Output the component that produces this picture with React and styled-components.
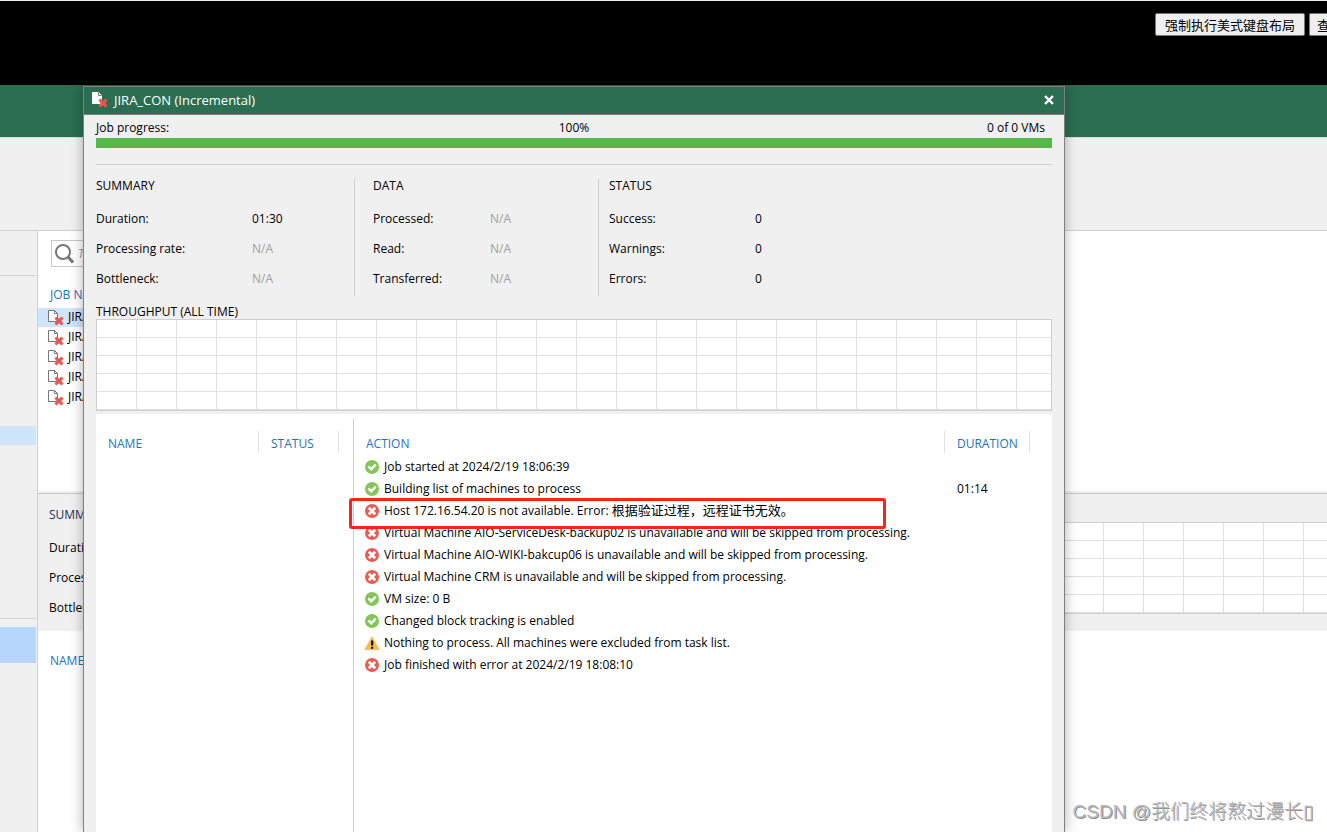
import React from 'react';
import styled, { createGlobalStyle, css } from 'styled-components';

const GlobalStyle = createGlobalStyle`
*, *::before, *::after {
    box-sizing: border-box;
}
body {
    margin: 0;
    overflow: hidden;
    font-family: "Open Sans", "Noto Sans CJK SC", sans-serif;
    font-size: 12px;
    line-height: 16px;
    color: #000;
}
button, input {
    font: inherit;
    color: inherit;
}
h1, h2, p, dl, dd {
    margin: 0;
    font: inherit;
}
table {
    border-collapse: collapse;
    table-layout: fixed;
}
th, td {
    padding: 0;
    text-align: left;
    font-weight: 400;
}
`

const Screen = styled.div`
position: relative;
display: flex;
flex-direction: column;
height: 100vh;
overflow: hidden;
background: #fff;
`

const ConsoleBar = styled.header`
display: flex;
justify-content: flex-end;
align-items: flex-start;
gap: 4px;
height: 85px;
flex: none;
padding-top: 12px;
background: #000;
border-top: 1px solid #f0f0f0;
overflow: hidden;
`

const KeyButton = styled.button`
flex: none;
height: 23px;
padding: 0 9px;
border: 1px solid #767676;
border-radius: 2px;
background: #efefef;
font-family: "Noto Sans CJK SC", sans-serif;
font-size: 13px;
line-height: 20px;
white-space: nowrap;
${({ $cut }) => $cut && css`
    width: 18px;
    padding: 0 0 0 7px;
    border-right: 0;
    border-radius: 2px 0 0 2px;
    overflow: hidden;
`}
`

const Ribbon = styled.div`
flex: none;
height: 52px;
background: #2b6e52;
`

const Toolbar = styled.div`
flex: none;
height: 94px;
background: #f0f0f0;
border-top: 1px solid #dcdcdc;
border-bottom: 1px solid #d0d0d0;
`

const Workspace = styled.div`
display: flex;
flex: 1;
min-height: 0;
`

const Sidebar = styled.nav`
display: flex;
flex-direction: column;
width: 38px;
flex: none;
padding-right: 1px;
background: #f0f0f0;
border-right: 1px solid #d0d0d0;
`

const SideHead = styled.div`
height: 45px;
border-bottom: 1px solid #d0d0d0;
`

const SideTree = styled.div`
height: 343px;
padding-top: 150px;
border-bottom: 1px solid #d0d0d0;
`

const SideItem = styled.div`
height: ${({ $tall }) => ($tall ? 36 : 19)}px;
margin-top: ${({ $tall }) => ($tall ? 8 : 0)}px;
background: ${({ $tall }) => ($tall ? '#b5d7fb' : '#cfe5f9')};
`

const Content = styled.main`
display: flex;
flex-direction: column;
flex: 1;
min-width: 0;
`

const JobList = styled.section`
height: 262px;
flex: none;
padding-top: 9px;
border-bottom: 2px solid #f0f0f0;
`

const SearchBox = styled.label`
display: flex;
align-items: center;
gap: 4px;
width: 300px;
height: 27px;
margin-left: 13px;
padding-left: 3px;
border: 1px solid #c8c8c8;
`

const SearchInput = styled.input`
flex: 1;
border: 0;
padding: 0;
outline: 0;
background: none;
font-style: italic;
&::placeholder {
    color: #999;
    opacity: 1;
}
`

const JobTable = styled.table`
width: 600px;
margin-top: 17px;
& th {
    height: 23px;
    padding: 0 0 1px 12px;
    color: #1c74bc;
}
`

const JobRow = styled.tr`
height: 20px;
& td {
    background: ${({ $active }) => ($active ? '#cfe5f9' : 'none')};
    background-clip: padding-box;
    border-top: 1px solid #fff;
}
`

const JobName = styled.div`
display: flex;
align-items: center;
gap: 4px;
height: 18px;
padding-left: 9px;
`

const JobDetails = styled.section`
display: flex;
justify-content: space-between;
height: 138px;
flex: none;
padding: 14px 0 0 11px;
background: #f0f0f0;
border-top: 1px solid #c8c8c8;
`

const BackChart = styled.div`
width: 464px;
margin-top: 14px;
`

const BackHead = styled.p`
padding: 22px 12px;
color: #1c74bc;
`

const Dialog = styled.div`
position: absolute;
top: 86px;
right: 262px;
bottom: 0;
left: 83px;
display: flex;
flex-direction: column;
background: #f0f0f0;
border: 1px solid #7c807e;
border-bottom: 0;
box-shadow: 0 0 12px rgba(0, 0, 0, .3);
`

const TitleBar = styled.header`
display: flex;
align-items: center;
gap: 6px;
height: 28px;
flex: none;
padding: 0 8px 2px 7px;
background: #2b6e52;
border-bottom: 1px solid #7c807e;
color: #fff;
`

const Title = styled.h1`
flex: 1;
font-size: 13px;
`

const CloseButton = styled.button`
display: flex;
padding: 2px;
border: 0;
background: none;
`

const DialogBody = styled.div`
display: flex;
flex-direction: column;
flex: 1;
min-height: 0;
padding: 5px 12px 0;
`

const ProgressLabels = styled.div`
display: grid;
grid-template-columns: 1fr auto 1fr;
& > :last-child {
    padding-right: 7px;
    text-align: right;
}
`

const ProgressBar = styled.div`
height: 10px;
margin-top: 2px;
background: #54b948;
`

const Stats = styled.div`
display: grid;
grid-template-columns: 258px 244px 1fr;
margin-top: 16px;
padding-top: 14px;
border-top: 1px solid #cfcfcf;
`

const StatGroup = styled.section`
height: 117px;
${({ $pad }) => $pad && css`
    padding-left: ${$pad}px;
    border-left: 1px solid #cfcfcf;
`}
`

const StatTitle = styled.h2`
height: 26px;
margin-top: -1px;
color: ${({ $back }) => ($back ? '#1f2f55' : '#000')};
`

const StatList = styled.dl`
display: grid;
grid-template-columns: ${({ $label }) => $label}px 1fr;
line-height: 30px;
`

const StatValue = styled.dd`
color: ${({ $muted }) => ($muted ? '#a0a0a0' : '#000')};
`

const ChartTitle = styled.h2`
height: 15px;
margin-top: 8px;
`

const Chart = styled.div`
height: 92px;
flex: none;
border: 1px solid #cfcfcf;
border-right-width: ${({ $open }) => ($open ? 0 : 1)}px;
background:
    linear-gradient(to right, transparent 39px, #e0e0e0 39px) 0 0 / 40px 100%,
    linear-gradient(to bottom, transparent 17px, #e0e0e0 17px) 0 0 / 100% 18px,
    #fff;
`

const Panels = styled.div`
display: flex;
flex: 1;
min-height: 0;
margin-top: 3px;
padding-top: 5px;
background: #fff;
`

const MachinePanel = styled.section`
width: 257px;
flex: none;
padding-top: 12px;
`

const MachineTable = styled.table`
width: 243px;
`

const ActionPanel = styled.section`
flex: 1;
padding: 12px 22px 0 0;
border-left: 1px solid #cfcfcf;
`

const ActionTable = styled.table`
width: 100%;
`

const Head = styled.th`
width: ${({ $width }) => ($width ? `${$width}px` : 'auto')};
height: 25px;
padding-bottom: 3px;
color: #1c74bc;
`

const HeadLabel = styled.div`
height: 22px;
padding: 0 12px;
line-height: 25px;
border-left: ${({ $line }) => ($line ? '1px solid #e0e0e0' : '0')};
border-right: ${({ $end }) => ($end ? '1px solid #e0e0e0' : '0')};
`

const ActionCell = styled.td`
position: relative;
height: 22px;
`

const ActionText = styled.div`
display: flex;
align-items: center;
gap: 5px;
padding-left: 11px;
white-space: nowrap;
`

const Chinese = styled.span`
font-family: "Noto Sans CJK SC", sans-serif;
font-size: 13px;
line-height: 1;
`

const DurationCell = styled.td`
padding-left: 13px;
`

// red frame drawn over the failing host
const Mark = styled.div`
position: absolute;
z-index: 1;
top: -2px;
right: 58px;
left: -5px;
height: 31px;
border: 3px solid #ff2314;
border-radius: 3px;
`

const Watermark = styled.p`
position: absolute;
right: 14px;
bottom: 6px;
color: #b8b8b8;
font-family: "Liberation Sans", "Noto Sans CJK SC", sans-serif;
font-size: 19px;
font-weight: 300;
line-height: 28px;
text-shadow: 1px 1px 0 #909090;
`

function JobIcon({ fill = '#fff', stroke = '#777' }) {
    return (
        <svg width="17" height="17" viewBox="0 0 17 17" aria-hidden="true">
            <path d="M1.5 1.5H7.5L10.5 4.5V12.5H1.5Z" fill={fill} stroke={stroke} />
            <path d="M7.5 1.5V4.5H10.5" fill="none" stroke="#777" />
            <path d="M8 9.5L9.5 8L12 10.3L14.5 8L16 9.5L13.8 12L16 14.5L14.5 16L12 13.7L9.5 16L8 14.5L10.2 12Z" fill="#e85552" stroke="#e85552" />
        </svg>
    )
}

function StateIcon({ state }) {
    if (state === 'warning') {
        return (
            <svg width="14" height="14" viewBox="0 0 14 14" overflow="visible" role="img" aria-label="Warning">
                <path d="M7 .8L14 13.4H0Z" fill="#f7bd4c" stroke="#f7bd4c" strokeLinejoin="round" />
                <path d="M6 4.5H8.2V9.5H6ZM6 10.7H8.2V12.7H6Z" fill="#111" />
            </svg>
        )
    }
    return (
        <svg width="14" height="14" viewBox="0 0 14 14" role="img" aria-label={state === 'ok' ? 'Success' : 'Error'}>
            <circle cx="7" cy="7" r="7" fill={state === 'ok' ? '#84c558' : '#ec5b50'} />
            {state === 'ok'
                ? <path d="M3.4 6.4L6.2 9.2L10.8 4.6" fill="none" stroke="#fff" strokeWidth="2.4" />
                : <path d="M3.8 3.8L10.2 10.2M10.2 3.8L3.8 10.2" fill="none" stroke="#fff" strokeWidth="2.8" />}
        </svg>
    )
}

function StatRows({ rows, label }) {
    return (
        <StatList $label={label}>
            {rows.map(([name, value]) => (
                <React.Fragment key={name}>
                    <dt>{name}</dt>
                    <StatValue $muted={value === 'N/A'}>{value}</StatValue>
                </React.Fragment>
            ))}
        </StatList>
    )
}

const jobs = [1, 2, 3, 4, 5]

const summary = [['Duration:', '01:30'], ['Processing rate:', 'N/A'], ['Bottleneck:', 'N/A']]
const data = [['Processed:', 'N/A'], ['Read:', 'N/A'], ['Transferred:', 'N/A']]
const status = [['Success:', '0'], ['Warnings:', '0'], ['Errors:', '0']]
const backSummary = [['Duration:', ''], ['Processing rate:', ''], ['Bottleneck:', '']]

const actions = [
    { state: 'ok', text: 'Job started at 2024/2/19 18:06:39' },
    { state: 'ok', text: 'Building list of machines to process', duration: '01:14' },
    { state: 'error', text: 'Host 172.16.54.20 is not available. Error: ', chinese: '根据验证过程，远程证书无效。', marked: true },
    { state: 'error', text: 'Virtual Machine AIO-ServiceDesk-backup02 is unavailable and will be skipped from processing.' },
    { state: 'error', text: 'Virtual Machine AIO-WIKI-bakcup06 is unavailable and will be skipped from processing.' },
    { state: 'error', text: 'Virtual Machine CRM is unavailable and will be skipped from processing.' },
    { state: 'ok', text: 'VM size: 0 B' },
    { state: 'ok', text: 'Changed block tracking is enabled' },
    { state: 'warning', text: 'Nothing to process. All machines were excluded from task list.' },
    { state: 'error', text: 'Job finished with error at 2024/2/19 18:08:10' },
]

function MainWindow() {
    return (
        <>
            <Ribbon />
            <Toolbar />
            <Workspace>
                <Sidebar>
                    <SideHead />
                    <SideTree><SideItem /></SideTree>
                    <SideItem $tall />
                </Sidebar>
                <Content>
                    <JobList>
                        <SearchBox>
                            <svg width="19" height="20" viewBox="0 0 19 20" aria-hidden="true">
                                <circle cx="8" cy="8" r="7" fill="none" stroke="#777" strokeWidth="2" />
                                <path d="M13 13L18 18.5" stroke="#777" strokeWidth="3" />
                            </svg>
                            <SearchInput type="text" aria-label="Search jobs" placeholder="Type in an object name" />
                        </SearchBox>
                        <JobTable>
                            <thead>
                                <tr><th>JOB NAME</th></tr>
                            </thead>
                            <tbody>
                                {jobs.map((job) => (
                                    <JobRow key={job} $active={job === 1}>
                                        <td><JobName><JobIcon />JIRA</JobName></td>
                                    </JobRow>
                                ))}
                            </tbody>
                        </JobTable>
                    </JobList>
                    <JobDetails>
                        <div>
                            <StatTitle $back>SUMMARY</StatTitle>
                            <StatRows rows={backSummary} label={156} />
                        </div>
                        <BackChart><Chart $open /></BackChart>
                    </JobDetails>
                    <BackHead>NAME</BackHead>
                </Content>
            </Workspace>
        </>
    )
}

function JobDialog() {
    return (
        <Dialog role="dialog" aria-labelledby="job-title">
            <TitleBar>
                <JobIcon stroke="#fff" />
                <Title id="job-title">JIRA_CON (Incremental)</Title>
                <CloseButton type="button" aria-label="Close">
                    <svg width="10" height="10" viewBox="0 0 10 10" aria-hidden="true">
                        <path d="M1 1L9 9M9 1L1 9" stroke="#fff" strokeWidth="2.4" />
                    </svg>
                </CloseButton>
            </TitleBar>
            <DialogBody>
                <ProgressLabels>
                    <span>Job progress:</span>
                    <span>100%</span>
                    <span>0 of 0 VMs</span>
                </ProgressLabels>
                <ProgressBar role="progressbar" aria-label="Job progress" aria-valuenow={100} />
                <Stats>
                    <StatGroup>
                        <StatTitle>SUMMARY</StatTitle>
                        <StatRows rows={summary} label={156} />
                    </StatGroup>
                    <StatGroup $pad={18}>
                        <StatTitle>DATA</StatTitle>
                        <StatRows rows={data} label={117} />
                    </StatGroup>
                    <StatGroup $pad={10}>
                        <StatTitle>STATUS</StatTitle>
                        <StatRows rows={status} label={146} />
                    </StatGroup>
                </Stats>
                <ChartTitle>THROUGHPUT (ALL TIME)</ChartTitle>
                <Chart />
                <Panels>
                    <MachinePanel>
                        <MachineTable>
                            <thead>
                                <tr>
                                    <Head><HeadLabel>NAME</HeadLabel></Head>
                                    <Head $width={81}><HeadLabel $line $end>STATUS</HeadLabel></Head>
                                </tr>
                            </thead>
                        </MachineTable>
                    </MachinePanel>
                    <ActionPanel>
                        <ActionTable>
                            <thead>
                                <tr>
                                    <Head><HeadLabel>ACTION</HeadLabel></Head>
                                    <Head $width={86}><HeadLabel $line $end>DURATION</HeadLabel></Head>
                                </tr>
                            </thead>
                            <tbody>
                                {actions.map(({ state, text, chinese, duration, marked }) => (
                                    <tr key={text}>
                                        <ActionCell>
                                            <ActionText>
                                                <StateIcon state={state} />
                                                <span>{text}{chinese && <Chinese>{chinese}</Chinese>}</span>
                                            </ActionText>
                                            {marked && <Mark />}
                                        </ActionCell>
                                        <DurationCell>{duration}</DurationCell>
                                    </tr>
                                ))}
                            </tbody>
                        </ActionTable>
                    </ActionPanel>
                </Panels>
            </DialogBody>
        </Dialog>
    )
}

function App() {
    return (
        <Screen>
            <GlobalStyle />
            <ConsoleBar>
                <KeyButton type="button">强制执行美式键盘布局</KeyButton>
                <KeyButton type="button" $cut>查</KeyButton>
            </ConsoleBar>
            <MainWindow />
            <JobDialog />
            <Watermark>CSDN @我们终将熬过漫长▯</Watermark>
        </Screen>
    )
}

export default App;
